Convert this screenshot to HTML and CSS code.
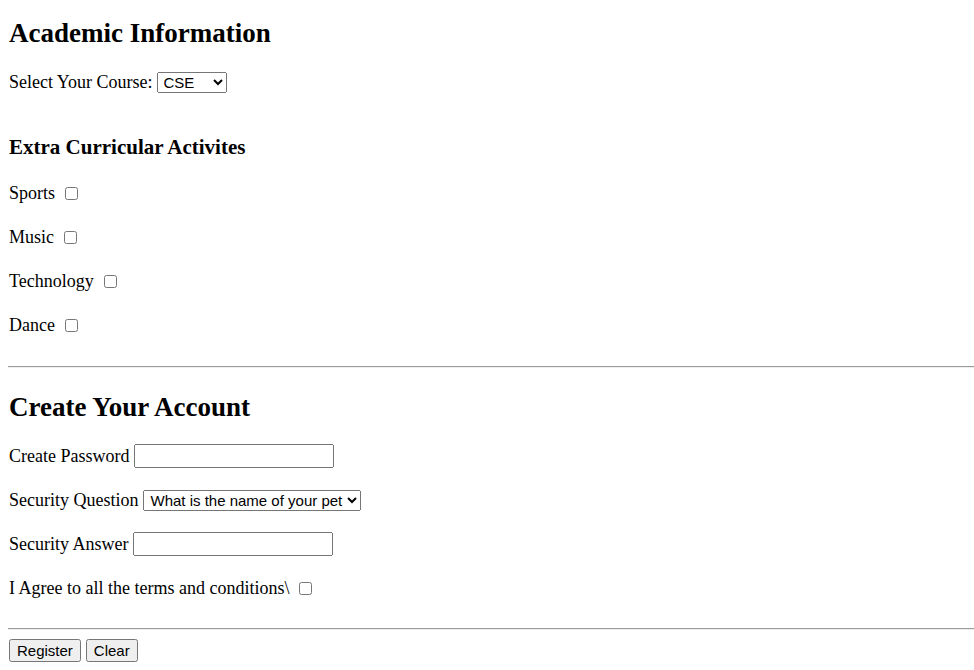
FILE: index.html
```html
<!DOCTYPE html>
<html lang="en">
<head>
<meta charset="utf-8">
<title>Registration</title>
<link rel="stylesheet" href="styles.css">
</head>
<body class="page">
  <h2 class="section-title">Academic Information</h2>
  <div class="row course-row">
    <label class="lbl" for="course">Select Your Course:</label>
    <select id="course" class="course-select">
      <option>CSE</option>
      <option>ECE</option>
      <option>MECH</option>
    </select>
  </div>

  <h3 class="sub-title">Extra Curricular Activites</h3>
  <div class="checks">
    <div class="row"><span class="lbl">Sports</span><input type="checkbox" class="chk"></div>
    <div class="row"><span class="lbl">Music</span><input type="checkbox" class="chk"></div>
    <div class="row"><span class="lbl">Technology</span><input type="checkbox" class="chk"></div>
    <div class="row"><span class="lbl">Dance</span><input type="checkbox" class="chk"></div>
  </div>

  <hr class="rule">

  <h2 class="section-title account-title">Create Your Account</h2>
  <div class="account">
    <div class="row"><span class="lbl">Create Password</span><input type="password" class="txt"></div>
    <div class="row"><span class="lbl">Security Question</span>
      <select class="q-select">
        <option>What is the name of your pet</option>
        <option>What is your birth city</option>
      </select>
    </div>
    <div class="row"><span class="lbl">Security Answer</span><input type="text" class="txt"></div>
    <div class="row"><span class="lbl">I Agree to all the terms and conditions\</span><input type="checkbox" class="chk"></div>
  </div>

  <hr class="rule rule-bottom">

  <div class="buttons">
    <button type="submit" class="btn btn-register">Register</button>
    <button type="reset" class="btn btn-clear">Clear</button>
  </div>
</body>
</html>
```
FILE: styles.css
```css
html, body {
  margin: 0;
  padding: 0;
}
.page {
  padding: 18px 0 0 9px;
  font-family: "Liberation Serif", "Times New Roman", serif;
  font-size: 18px;
  color: #000;
  background: #fff;
}
.section-title {
  margin: 0;
  font-size: 27px;
  font-weight: bold;
  line-height: 31px;
}
.sub-title {
  margin: 31px 0 0;
  font-size: 21px;
  font-weight: bold;
  line-height: 24px;
}
.row {
  display: flex;
  align-items: center;
  height: 44px;
}
.lbl {
  white-space: pre;
}
.course-row {
  margin-top: 11px;
}
.checks {
  margin-top: 12px;
}
.chk {
  margin: 0 0 0 10px;
  width: 13px;
  height: 13px;
}
.course-select {
  margin-left: 4px;
  font-family: "Liberation Sans", Arial, sans-serif;
  font-size: 15px;
  width: 70px;
  height: 21px;
  padding: 0 0 0 2px;
}
.q-select {
  margin-left: 5px;
  font-family: "Liberation Sans", Arial, sans-serif;
  font-size: 15px;
  width: 218px;
  height: 21px;
  padding: 0 0 0 2px;
}
.txt {
  margin-left: 5px;
  width: 200px;
  height: 24px;
  box-sizing: border-box;
}
.rule {
  margin: 19px 0 0 -1px;
  border: 0;
  border-top: 1px solid #9a9a9a;
  border-bottom: 1px solid #eee;
  height: 0;
}
.rule-bottom {
  margin-top: 18px;
}
.account-title {
  margin-top: 24px;
}
.account {
  margin-top: 11px;
}
.buttons {
  display: flex;
  gap: 5px;
  margin-top: 9px;
}
.btn {
  font-family: "Liberation Sans", Arial, sans-serif;
  font-size: 15px;
  height: 23px;
  padding: 0 6px;
  line-height: 19px;
}
```
